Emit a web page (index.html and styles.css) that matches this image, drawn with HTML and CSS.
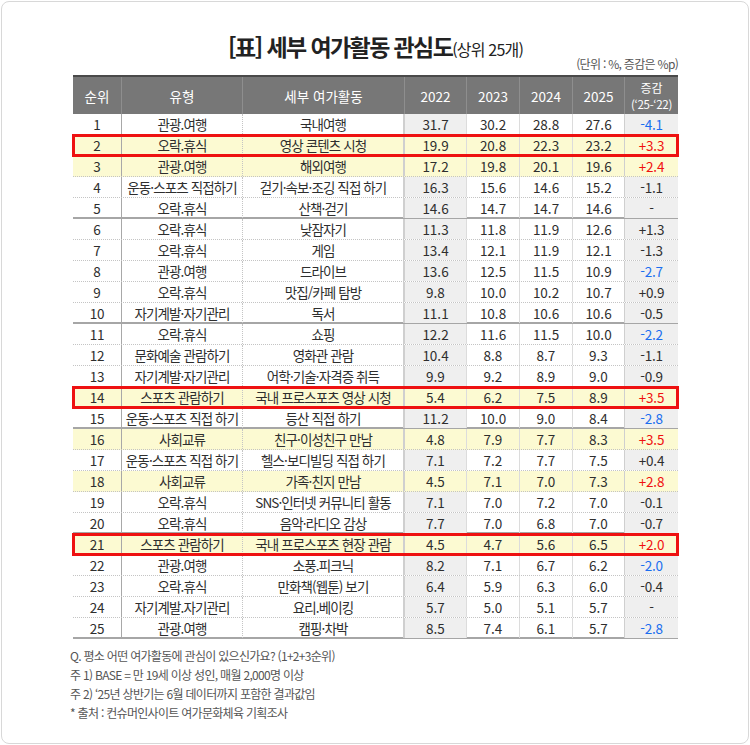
FILE: index.html
```html
<!DOCTYPE html>
<html lang="ko">
<head>
<meta charset="utf-8">
<link rel="stylesheet" href="styles.css">
</head>
<body>
<div class="frame">
  <h1 class="title">[표] 세부 여가활동 관심도<span class="sub">(상위 25개)</span></h1>
  <div class="unit">(단위 : %, 증감은 %p)</div>
  <div class="table">
    <div class="row head">
      <div class="c">순위</div><div class="c">유형</div><div class="c">세부 여가활동</div>
      <div class="c n">2022</div><div class="c n">2023</div><div class="c n">2024</div><div class="c n">2025</div>
      <div class="c d"><span>증감</span><span class="small">(‘25-‘22)</span></div>
    </div>
    <div class="row"><div class="c">1</div><div class="c t">관광.여행</div><div class="c a">국내여행</div><div class="c n g">31.7</div><div class="c n">30.2</div><div class="c n">28.8</div><div class="c n">27.6</div><div class="c d g blue">-4.1</div></div>
    <div class="row y box"><div class="c">2</div><div class="c t">오락.휴식</div><div class="c a">영상 콘텐츠 시청</div><div class="c n g">19.9</div><div class="c n">20.8</div><div class="c n">22.3</div><div class="c n">23.2</div><div class="c d g red">+3.3</div></div>
    <div class="row y"><div class="c">3</div><div class="c t">관광.여행</div><div class="c a">해외여행</div><div class="c n g">17.2</div><div class="c n">19.8</div><div class="c n">20.1</div><div class="c n">19.6</div><div class="c d g red">+2.4</div></div>
    <div class="row"><div class="c">4</div><div class="c t">운동·스포츠 직접하기</div><div class="c a">걷기·속보·조깅 직접 하기</div><div class="c n g">16.3</div><div class="c n">15.6</div><div class="c n">14.6</div><div class="c n">15.2</div><div class="c d g">-1.1</div></div>
    <div class="row end"><div class="c">5</div><div class="c t">오락.휴식</div><div class="c a">산책·걷기</div><div class="c n g">14.6</div><div class="c n">14.7</div><div class="c n">14.7</div><div class="c n">14.6</div><div class="c d g">-</div></div>
    <div class="row"><div class="c">6</div><div class="c t">오락.휴식</div><div class="c a">낮잠자기</div><div class="c n g">11.3</div><div class="c n">11.8</div><div class="c n">11.9</div><div class="c n">12.6</div><div class="c d g">+1.3</div></div>
    <div class="row"><div class="c">7</div><div class="c t">오락.휴식</div><div class="c a">게임</div><div class="c n g">13.4</div><div class="c n">12.1</div><div class="c n">11.9</div><div class="c n">12.1</div><div class="c d g">-1.3</div></div>
    <div class="row"><div class="c">8</div><div class="c t">관광.여행</div><div class="c a">드라이브</div><div class="c n g">13.6</div><div class="c n">12.5</div><div class="c n">11.5</div><div class="c n">10.9</div><div class="c d g blue">-2.7</div></div>
    <div class="row"><div class="c">9</div><div class="c t">오락.휴식</div><div class="c a">맛집/카페 탐방</div><div class="c n g">9.8</div><div class="c n">10.0</div><div class="c n">10.2</div><div class="c n">10.7</div><div class="c d g">+0.9</div></div>
    <div class="row end"><div class="c">10</div><div class="c t">자기계발·자기관리</div><div class="c a">독서</div><div class="c n g">11.1</div><div class="c n">10.8</div><div class="c n">10.6</div><div class="c n">10.6</div><div class="c d g">-0.5</div></div>
    <div class="row"><div class="c">11</div><div class="c t">오락.휴식</div><div class="c a">쇼핑</div><div class="c n g">12.2</div><div class="c n">11.6</div><div class="c n">11.5</div><div class="c n">10.0</div><div class="c d g blue">-2.2</div></div>
    <div class="row"><div class="c">12</div><div class="c t">문화예술 관람하기</div><div class="c a">영화관 관람</div><div class="c n g">10.4</div><div class="c n">8.8</div><div class="c n">8.7</div><div class="c n">9.3</div><div class="c d g">-1.1</div></div>
    <div class="row"><div class="c">13</div><div class="c t">자기계발·자기관리</div><div class="c a">어학·기술·자격증 취득</div><div class="c n g">9.9</div><div class="c n">9.2</div><div class="c n">8.9</div><div class="c n">9.0</div><div class="c d g">-0.9</div></div>
    <div class="row y box"><div class="c">14</div><div class="c t">스포츠 관람하기</div><div class="c a">국내 프로스포츠 영상 시청</div><div class="c n g">5.4</div><div class="c n">6.2</div><div class="c n">7.5</div><div class="c n">8.9</div><div class="c d g red">+3.5</div></div>
    <div class="row end"><div class="c">15</div><div class="c t">운동·스포츠 직접 하기</div><div class="c a">등산 직접 하기</div><div class="c n g">11.2</div><div class="c n">10.0</div><div class="c n">9.0</div><div class="c n">8.4</div><div class="c d g blue">-2.8</div></div>
    <div class="row y"><div class="c">16</div><div class="c t">사회교류</div><div class="c a">친구·이성친구 만남</div><div class="c n g">4.8</div><div class="c n">7.9</div><div class="c n">7.7</div><div class="c n">8.3</div><div class="c d g red">+3.5</div></div>
    <div class="row"><div class="c">17</div><div class="c t">운동·스포츠 직접 하기</div><div class="c a">헬스·보디빌딩 직접 하기</div><div class="c n g">7.1</div><div class="c n">7.2</div><div class="c n">7.7</div><div class="c n">7.5</div><div class="c d g">+0.4</div></div>
    <div class="row y"><div class="c">18</div><div class="c t">사회교류</div><div class="c a">가족·친지 만남</div><div class="c n g">4.5</div><div class="c n">7.1</div><div class="c n">7.0</div><div class="c n">7.3</div><div class="c d g red">+2.8</div></div>
    <div class="row"><div class="c">19</div><div class="c t">오락.휴식</div><div class="c a">SNS·인터넷 커뮤니티 활동</div><div class="c n g">7.1</div><div class="c n">7.0</div><div class="c n">7.2</div><div class="c n">7.0</div><div class="c d g">-0.1</div></div>
    <div class="row end"><div class="c">20</div><div class="c t">오락.휴식</div><div class="c a">음악·라디오 감상</div><div class="c n g">7.7</div><div class="c n">7.0</div><div class="c n">6.8</div><div class="c n">7.0</div><div class="c d g">-0.7</div></div>
    <div class="row y box"><div class="c">21</div><div class="c t">스포츠 관람하기</div><div class="c a">국내 프로스포츠 현장 관람</div><div class="c n g">4.5</div><div class="c n">4.7</div><div class="c n">5.6</div><div class="c n">6.5</div><div class="c d g red">+2.0</div></div>
    <div class="row"><div class="c">22</div><div class="c t">관광.여행</div><div class="c a">소풍.피크닉</div><div class="c n g">8.2</div><div class="c n">7.1</div><div class="c n">6.7</div><div class="c n">6.2</div><div class="c d g blue">-2.0</div></div>
    <div class="row"><div class="c">23</div><div class="c t">오락.휴식</div><div class="c a">만화책(웹툰) 보기</div><div class="c n g">6.4</div><div class="c n">5.9</div><div class="c n">6.3</div><div class="c n">6.0</div><div class="c d g">-0.4</div></div>
    <div class="row"><div class="c">24</div><div class="c t">자기계발.자기관리</div><div class="c a">요리.베이킹</div><div class="c n g">5.7</div><div class="c n">5.0</div><div class="c n">5.1</div><div class="c n">5.7</div><div class="c d g">-</div></div>
    <div class="row end"><div class="c">25</div><div class="c t">관광.여행</div><div class="c a">캠핑·차박</div><div class="c n g">8.5</div><div class="c n">7.4</div><div class="c n">6.1</div><div class="c n">5.7</div><div class="c d g blue">-2.8</div></div>
  </div>
  <div class="notes">
    <p>Q. 평소 어떤 여가활동에 관심이 있으신가요? (1+2+3순위)</p>
    <p>주 1) BASE = 만 19세 이상 성인, 매월 2,000명 이상</p>
    <p>주 2) ‘25년 상반기는 6월 데이터까지 포함한 결과값임</p>
    <p>* 출처 : 컨슈머인사이트 여가문화체육 기획조사</p>
  </div>
</div>
</body>
</html>
```

FILE: styles.css
```css
html, body {
  margin: 0;
  padding: 0;
  background: #ffffff;
}

body {
  font-family: "Noto Sans CJK KR", "Noto Sans", sans-serif;
  color: #2e2e2e;
}

.frame {
  box-sizing: border-box;
  width: 748px;
  height: 743px;
  margin: 1px;
  border: 1px solid #d8d8d8;
  border-radius: 8px;
  padding: 0 70px 0 71px;
}

.title {
  margin: 29px 0 0;
  height: 30px;
  line-height: 30px;
  text-align: center;
  font-size: 23px;
  font-weight: 700;
  letter-spacing: -1.6px;
  color: #222222;
}

.title .sub {
  font-size: 16px;
  font-weight: 400;
  letter-spacing: -0.8px;
}

.unit {
  height: 16px;
  line-height: 16px;
  margin-top: -5px;
  text-align: right;
  font-size: 12px;
  letter-spacing: -0.7px;
  color: #555555;
}

.table {
  margin-top: 3px;
  width: 605px;
}

.row {
  display: grid;
  grid-template-columns: 49px 121px 162px 62px 53px 53px 52px 53px;
  box-sizing: border-box;
  height: 21px;
  border-bottom: 1px dotted #c4c4c4;
  background: #ffffff;
}

.row.end {
  border-bottom: 2px solid #a6a6a6;
}

.c {
  display: flex;
  align-items: center;
  justify-content: center;
  font-size: 13.5px;
  white-space: nowrap;
  box-sizing: border-box;
  letter-spacing: -0.2px;
}

.c.t, .c.a {
  letter-spacing: -0.9px;
}

.row .c:nth-child(1) { border-right: 1px solid #a8a8a8; }
.row .c:nth-child(2) { border-right: 1px dotted #c4c4c4; }
.row .c:nth-child(3) { border-right: 2px solid #cfcfcf; }
.row .c:nth-child(4),
.row .c:nth-child(5),
.row .c:nth-child(6) { border-right: 1px solid #dcdcdc; }
.row .c:nth-child(7) { border-right: 1px solid #cfcfcf; }

.c.n { letter-spacing: 0; }

.c.g { background: #efefef; }

.row.y, .row.y .c { background: #fcfad2; }

.row.box {
  outline: 3px solid #ee1111;
  outline-offset: -2px;
}

.blue { color: #1a6ef0; }
.red { color: #f01010; }

.row.head {
  height: 39px;
  background: #777777;
  border-top: 2px solid #4a4a4a;
  border-bottom: none;
}

.row.head .c {
  color: #ffffff;
  font-size: 13.5px;
  border-right: 1px solid #8e8e8e;
  letter-spacing: 0;
}

.row.head .c:last-child { border-right: none; }

.row.head .c.d {
  flex-direction: column;
  font-size: 12px;
}

.row.head .c.d span {
  display: block;
  line-height: 16px;
  height: 16px;
}

.row.head .small {
  font-size: 11.5px;
  letter-spacing: -0.3px;
}

.notes {
  margin: 7px 0 0 -3px;
  font-size: 12px;
  color: #555555;
  letter-spacing: -0.7px;
}

.notes p {
  margin: 0;
  line-height: 19px;
}
```
